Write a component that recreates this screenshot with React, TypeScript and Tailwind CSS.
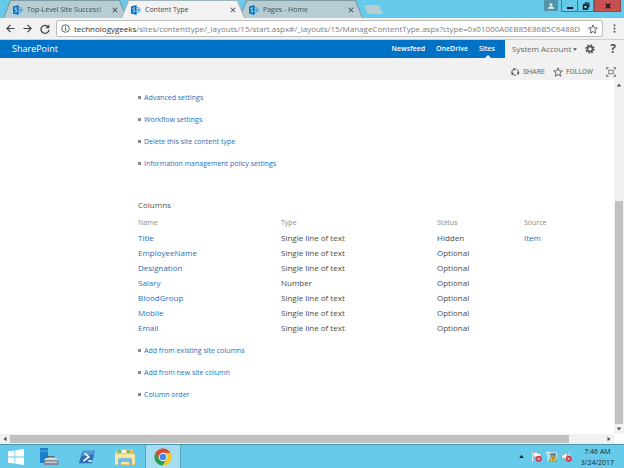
import type { ReactNode } from "react";
import { clsx } from "clsx";

const TABS = [
  { title: "Top-Level Site Successf", active: false },
  { title: "Content Type", active: true },
  { title: "Pages - Home", active: false },
];

const SETTINGS_LINKS = [
  "Advanced settings",
  "Workflow settings",
  "Delete this site content type",
  "Information management policy settings",
];

const COLUMN_LINKS = ["Add from existing site columns", "Add from new site column", "Column order"];

const COLUMNS = [
  { name: "Title", type: "Single line of text", status: "Hidden", source: "Item" },
  { name: "EmployeeName", type: "Single line of text", status: "Optional", source: "" },
  { name: "Designation", type: "Single line of text", status: "Optional", source: "" },
  { name: "Salary", type: "Number", status: "Optional", source: "" },
  { name: "BloodGroup", type: "Single line of text", status: "Optional", source: "" },
  { name: "Mobile", type: "Single line of text", status: "Optional", source: "" },
  { name: "Email", type: "Single line of text", status: "Optional", source: "" },
];

function SharePointIcon() {
  return (
    <svg viewBox="0 0 18 18" className="w-[10px] h-[10px] shrink-0">
      <circle cx="12" cy="9" r="4.6" fill="none" stroke="#5ba3dc" strokeWidth="1.8" />
      <circle cx="13" cy="9" r="1.8" fill="#2b84cc" />
      <path d="M0 2.5 10 0v18L0 15.5z" fill="#0072c6" />
      <path d="M7.2 5.8C4.8 4.6 3 5.6 3.2 7c.3 2 4 1.7 3.9 3.9C7 12.6 5 13.2 2.8 12" fill="none" stroke="#fff" strokeWidth="1.5" />
    </svg>
  );
}

function CloseIcon() {
  return (
    <svg viewBox="0 0 8 8" className="w-[6px] h-[6px]" stroke="#4a5357" strokeWidth="1.4">
      <path d="M1 1l6 6M7 1 1 7" />
    </svg>
  );
}

function Tab({ title, active }: { title: string; active: boolean }) {
  return (
    <div
      className={clsx(
        "relative w-[124px] h-[18px] -mr-[6px] pt-px px-px [clip-path:polygon(7px_0,117px_0,100%_100%,0_100%)]",
        active ? "z-10 bg-[#9fb4bb]" : "bg-[#7f9ca6]"
      )}
    >
      <div
        className={clsx(
          "flex items-center h-full pl-[9px] pr-[7px] [clip-path:polygon(7px_0,115px_0,100%_100%,0_100%)]",
          active ? "bg-[#f2f2f2]" : "bg-[#b5cdd3]"
        )}
      >
        <SharePointIcon />
        <span
          className={clsx(
            "ml-[4px] flex-1 whitespace-nowrap text-[7px] leading-[12px] text-[#414b50]",
            !active && "[mask-image:linear-gradient(to_right,#000_85%,transparent)]"
          )}
        >
          {title}
        </span>
        <button aria-label={`Close ${title}`} className="ml-[4px] w-[8px] flex justify-center">
          <CloseIcon />
        </button>
      </div>
    </div>
  );
}

function WindowControls() {
  return (
    <div className="ml-auto mr-[3px] flex items-start">
      <button aria-label="User" className="mr-[3px] w-[14px] h-[11px] bg-[#5294a8] flex items-center justify-center">
        <svg viewBox="0 0 10 10" className="w-[6px] h-[6px]" fill="#e4f1f5">
          <circle cx="5" cy="2.8" r="2.4" />
          <path d="M0 9.5V8l3-2h4l3 2v1.5z" />
        </svg>
      </button>
      <button aria-label="Minimize" className="w-[17px] h-[12px] border border-t-0 border-[#3b7f96] flex items-center justify-center">
        <svg viewBox="0 0 8 8" className="w-[8px] h-[8px]">
          <path d="M1 5h6v2H1z" fill="#111" />
        </svg>
      </button>
      <button aria-label="Restore" className="w-[16px] h-[12px] border border-t-0 border-l-0 border-[#3b7f96] flex items-center justify-center">
        <svg viewBox="0 0 8 8" className="w-[8px] h-[8px]" fill="none" stroke="#111">
          <path d="M3 2V1h4v4H6" />
          <path d="M1.5 3h4v4h-4z" strokeWidth="1.4" />
        </svg>
      </button>
      <button aria-label="Close window" className="w-[27px] h-[12px] bg-[#c75050] border border-t-0 border-[#8f4a4e] flex items-center justify-center">
        <svg viewBox="0 0 8 8" className="w-[6px] h-[6px]" stroke="#111" strokeWidth="1.9">
          <path d="M1 1l6 6M7 1 1 7" />
        </svg>
      </button>
    </div>
  );
}

function StarIcon() {
  return (
    <svg viewBox="0 0 12 12" className="w-[10px] h-[10px] shrink-0" fill="none" stroke="#5a5a5a" strokeWidth="1.1">
      <path d="M6 1l1.400 3.600 3.900.2-3 2.500 1 3.800L6 9l-3.300 2.100 1-3.800-3-2.500 3.900-.2z" />
    </svg>
  );
}

function Toolbar() {
  return (
    <div className="flex items-center h-[22px] px-[6px] bg-[#f2f2f2] border-b border-[#cfcfcf]">
      <button aria-label="Back" className="w-[17px]">
        <svg viewBox="0 0 10 10" className="w-[9px] h-[9px]" fill="none" stroke="#444" strokeWidth="1.3">
          <path d="M9.5 5H1M5 1 1 5l4 4" />
        </svg>
      </button>
      <button aria-label="Forward" className="w-[17px]">
        <svg viewBox="0 0 10 10" className="w-[9px] h-[9px]" fill="none" stroke="#444" strokeWidth="1.3">
          <path d="M.5 5H9M5 1l4 4-4 4" />
        </svg>
      </button>
      <button aria-label="Reload" className="w-[16px]">
        <svg viewBox="0 0 10 10" className="w-[10px] h-[10px]" fill="none" stroke="#444" strokeWidth="1.3">
          <path d="M8.3 3A4 4 0 1 0 9 5.8" />
          <path d="M9.3.5v3.8H5.5z" fill="#444" stroke="none" />
        </svg>
      </button>
      <div className="flex items-center flex-1 min-w-0 h-[17px] px-[4px] bg-white border border-[#bdbdbd] rounded-[2px]">
        <svg viewBox="0 0 10 10" className="w-[9px] h-[9px] shrink-0" fill="none" stroke="#555">
          <circle cx="5" cy="5" r="4.2" />
          <path d="M5 4.300v3.200M5 2.300v1.200" strokeWidth="1.1" />
        </svg>
        <div className="ml-[4px] flex-1 min-w-0 whitespace-nowrap text-[8px] leading-[14px] text-[#7d7d7d]">
          <span className="text-[#2f2f2f]">technologygeeks</span>
          /sites/contenttype/_layouts/15/start.aspx#/_layouts/15/ManageContentType.aspx?ctype=0x01000A0EB85E86B5C6488D
        </div>
        <button aria-label="Bookmark this page" className="ml-[3px]">
          <StarIcon />
        </button>
      </div>
      <button aria-label="Menu" className="ml-[8px] w-[7px] flex justify-center">
        <svg viewBox="0 0 4 12" className="w-[3px] h-[9px]" fill="#555">
          <circle cx="2" cy="1.6" r="1.3" />
          <circle cx="2" cy="6" r="1.3" />
          <circle cx="2" cy="10.4" r="1.3" />
        </svg>
      </button>
    </div>
  );
}

function SuiteBar() {
  return (
    <div className="flex h-[18px] leading-[18px]">
      <div className="flex flex-1 pl-[12px] pr-[10px] bg-[#0072c6] text-white">
        <a href="#" className="text-[9px]">SharePoint</a>
        <nav className="ml-auto flex gap-[11px] text-[7px] font-semibold">
          <a href="#">Newsfeed</a>
          <a href="#">OneDrive</a>
          <a href="#" className="relative">
            Sites
            <span className="absolute left-1/2 bottom-0 -ml-[2px] border-x-[3px] border-b-[3px] border-x-transparent border-b-[#f1f1f1]" />
          </a>
        </nav>
      </div>
      <div className="flex items-center w-[119px] px-[7px] text-[#666]">
        <button className="flex items-center gap-[2px] text-[8px] whitespace-nowrap">
          System Account
          <svg viewBox="0 0 6 4" className="w-[4px] h-[3px]" fill="#555">
            <path d="M0 0h6L3 4z" />
          </svg>
        </button>
        <button aria-label="Settings" className="ml-auto">
          <svg viewBox="0 0 20 20" className="w-[10px] h-[10px]" fill="none" stroke="#555">
            <circle cx="10" cy="10" r="5.2" strokeWidth="3.4" />
            <circle cx="10" cy="10" r="8" strokeWidth="3" strokeDasharray="3.140 3.140" />
          </svg>
        </button>
        <button aria-label="Help" className="ml-[14px] w-[8px] text-[12px] font-bold text-[#555]">?</button>
      </div>
    </div>
  );
}

function ActionBar() {
  return (
    <div className="flex items-center justify-end h-[22px] pt-[5px] pr-[8px] font-[Roboto,sans-serif] text-[7px] leading-[10px] text-[#666]">
      <button className="flex items-center gap-[3px]">
        <svg viewBox="0 0 20 20" className="w-[10px] h-[10px]" fill="none" stroke="#555" strokeWidth="2">
          <path d="M4 12A6.500 6.500 0 0 1 8 4M13 4.200A6.500 6.500 0 0 1 16 13M12.500 16.200a6.500 6.500 0 0 1-6-.8" />
          <path d="M7 1l5 3-4 4zM19 10l-2 6-4-4zM2 11l6 1-4 5z" fill="#555" stroke="none" />
        </svg>
        SHARE
      </button>
      <button className="ml-[8px] flex items-center gap-[3px]">
        <StarIcon />
        FOLLOW
      </button>
      <button aria-label="Focus on content" className="ml-[13px]">
        <svg viewBox="0 0 20 20" className="w-[10px] h-[10px]" fill="none" stroke="#666" strokeWidth="1.6">
          <path d="M1 5V1h4M15 1h4v4M19 15v4h-4M5 19H1v-4" />
          <path d="M5.500 6.500h9v7h-9z" />
          <path d="M1 1l4 5M19 1l-4 5M1 19l4-5M19 19l-4-5" strokeWidth="1" />
        </svg>
      </button>
    </div>
  );
}

function LinkList({ items }: { items: string[] }) {
  return (
    <ul className="flex flex-col gap-[11px]">
      {items.map(item => (
        <li key={item} className="flex items-center gap-[3px] h-[11px] text-[7px] leading-[11px]">
          <span className="w-[3px] h-[3px] bg-[#8a8a8a]" />
          <a href="#" className="text-[#1f6fb8]">{item}</a>
        </li>
      ))}
    </ul>
  );
}

function ColumnsTable() {
  return (
    <table className="w-full table-fixed text-left text-[8px] leading-[15px] text-[#4a4a4a]">
      <colgroup>
        <col className="w-[143px]" />
        <col className="w-[156px]" />
        <col className="w-[87px]" />
        <col />
      </colgroup>
      <thead>
        <tr className="h-[15px] text-[7px] text-[#8a8a8a]">
          <th className="font-normal">Name</th>
          <th className="font-normal">Type</th>
          <th className="font-normal">Status</th>
          <th className="font-normal">Source</th>
        </tr>
      </thead>
      <tbody>
        {COLUMNS.map(c => (
          <tr key={c.name} className="h-[15px]">
            <td><a href="#" className="text-[#1f6fb8]">{c.name}</a></td>
            <td>{c.type}</td>
            <td>{c.status}</td>
            <td>{c.source && <a href="#" className="text-[#1f6fb8]">{c.source}</a>}</td>
          </tr>
        ))}
      </tbody>
    </table>
  );
}

function Arrow({ d }: { d: string }) {
  return (
    <svg viewBox="0 0 8 8" className="w-[6px] h-[6px]" fill="#505050">
      <path d={d} />
    </svg>
  );
}

function VerticalScrollbar() {
  return (
    <div className="flex flex-col w-[10px] bg-[#f1f1f1]">
      <span className="h-[10px] flex items-center justify-center"><Arrow d="M1 6h6L4 2z" /></span>
      <div className="flex-1 flex flex-col pt-[111px]">
        <span className="flex-1 mx-px bg-[#c1c1c1]" />
      </div>
      <span className="h-[10px] flex items-center justify-center"><Arrow d="M1 2h6L4 6z" /></span>
    </div>
  );
}

function HorizontalScrollbar() {
  return (
    <div className="flex h-[10px] mr-[10px] bg-[#f1f1f1]">
      <span className="w-[10px] flex items-center justify-center"><Arrow d="M6 1v6L2 4z" /></span>
      <div className="flex-1 pr-[35px] py-px">
        <span className="block h-full bg-[#c1c1c1]" />
      </div>
      <span className="w-[10px] flex items-center justify-center"><Arrow d="M2 1v6l4-3z" /></span>
    </div>
  );
}

function TaskButton({ label, active, children }: { label: string; active?: boolean; children: ReactNode }) {
  return (
    <button
      aria-label={label}
      className={clsx(
        "w-[36px] mr-[2px] flex items-center justify-center border-x",
        active ? "bg-[#a5dcf2] border-[#5a9fb8]" : "border-transparent"
      )}
    >
      {children}
    </button>
  );
}

function Taskbar() {
  return (
    <footer className="flex h-[24px] shrink-0 bg-[#66cbea] border-t border-[#4b95ab]">
      <button aria-label="Start" className="w-[31px] flex items-center justify-center">
        <svg viewBox="0 0 16 16" className="w-[16px] h-[16px]" fill="#fff">
          <path d="M0 2.300 6.500 1.400v6.200H0zM7.300 1.300 16 0v7.600H7.300zM0 8.400h6.500v6.200L0 13.700zM7.300 8.400H16V16l-8.700-1.300z" />
        </svg>
      </button>
      <TaskButton label="Server Manager">
        <svg viewBox="0 0 20 20" className="w-[20px] h-[20px]">
          <path d="M1 1h8v15H1z" fill="#1c7fc9" />
          <path d="M1 4h8" stroke="#75bfe8" strokeWidth=".8" />
          <path d="M9 11V9.500h6V11" fill="none" stroke="#55646c" />
          <path d="M5 13l2-2h10l2.500 2z" fill="#d2dadd" />
          <path d="M5 13h14.500v5H5z" fill="#7f8e95" />
          <path d="M6.500 15.200h11.500" stroke="#e8eef0" />
        </svg>
      </TaskButton>
      <TaskButton label="Windows PowerShell">
        <svg viewBox="0 0 20 20" className="w-[18px] h-[18px]">
          <path d="M5 3h14l-3.500 14H1z" fill="#2e6eb5" />
          <path d="M5 3h14l-1 4-14 2z" fill="#5b98d3" />
          <path d="M7.500 6l4.500 4-6 4.500M11.500 14.500h4" fill="none" stroke="#fff" strokeWidth="1.8" />
        </svg>
      </TaskButton>
      <TaskButton label="File Explorer">
        <svg viewBox="0 0 22 20" className="w-[22px] h-[20px]">
          <path d="M1 4h6l1-2h11v5h2v11H1z" fill="#e8c567" />
          <path d="M4 3h3v3H4zM13 3h3v3h-3z" fill="#76b96f" />
          <path d="M8 3h4v3H8z" fill="#f8f3df" />
          <path d="M1 7h20v10H1z" fill="#f9e6a4" />
          <path d="M4 18v-5q0-2 2-2h10q2 0 2 2v5h-3v-3H7v3z" fill="#79bce0" />
        </svg>
      </TaskButton>
      <TaskButton label="Google Chrome" active>
        <svg viewBox="0 0 20 20" className="w-[18px] h-[18px]">
          <circle cx="10" cy="10" r="9.5" fill="#f3c925" />
          <path d="M1.800 5.250A9.500 9.500 0 0 1 18.200 5.250H10L5.900 12.400z" fill="#dc4437" />
          <path d="M1.800 5.250 5.900 12.400 10 14.700l3.600-2-4.100 6.800A9.500 9.500 0 0 1 1.800 5.250z" fill="#249b58" />
          <circle cx="10" cy="10" r="4.7" fill="#fff" />
          <circle cx="10" cy="10" r="3.7" fill="#4385ec" />
        </svg>
      </TaskButton>
      <div className="ml-auto flex items-center pr-[10px]">
        <svg viewBox="0 0 6 4" className="w-[5px] h-[3px] mr-[7px]" fill="#111">
          <path d="M0 4h6L3 0z" />
        </svg>
        <div className="flex gap-[4px]">
          <svg viewBox="0 0 20 20" className="w-[11px] h-[11px]">
            <path d="M3 1v18" stroke="#eef3f4" strokeWidth="2" />
            <path d="M4 2h7l1 2h6v9h-7l-1-2H4z" fill="#f7fafb" stroke="#6d7d83" />
            <circle cx="14" cy="14" r="5.5" fill="#d7314a" />
            <path d="M12 12l4 4M16 12l-4 4" stroke="#fff" strokeWidth="1.5" />
          </svg>
          <svg viewBox="0 0 20 20" className="w-[11px] h-[11px]">
            <path d="M2 1v5q0 2 2 2v10M1 3h7" fill="none" stroke="#eef3f4" strokeWidth="2" />
            <path d="M7 3h12v9H7z" fill="#668896" stroke="#eef3f4" strokeWidth="1.5" />
            <path d="M13 7l6.500 12h-13z" fill="#f4c632" stroke="#a67c15" />
            <path d="M13 11v4M13 16v1.500" stroke="#222" strokeWidth="1.5" />
          </svg>
          <svg viewBox="0 0 20 20" className="w-[11px] h-[11px]">
            <path d="M1 7h4l6-5v16l-6-5H1z" fill="#f7fafb" stroke="#6d7d83" />
            <path d="M14 4q4 5 0 11" fill="none" stroke="#fff" strokeWidth="1.5" />
            <circle cx="14" cy="14" r="5.5" fill="#d7314a" />
            <path d="M12 12l4 4M16 12l-4 4" stroke="#fff" strokeWidth="1.5" />
          </svg>
        </div>
        <div className="ml-[9px] text-center text-[7px] leading-[11px] text-[#122a33]">
          <div>7:46 AM</div>
          <div>3/24/2017</div>
        </div>
      </div>
    </footer>
  );
}

export default function App() {
  return (
    <div className="flex flex-col min-h-screen bg-white font-['Open_Sans','Noto_Sans',sans-serif]">
      <header>
        <div className="flex h-[18px] pl-[3px] bg-[#66cbea]">
          {TABS.map(tab => (
            <Tab key={tab.title} title={tab.title} active={tab.active} />
          ))}
          <button
            aria-label="New tab"
            className="ml-[7px] mt-[5px] w-[19px] h-[9px] bg-[#b5cdd3] [clip-path:polygon(0_0,15px_0,100%_100%,4px_100%)]"
          />
          <WindowControls />
        </div>
        <Toolbar />
      </header>

      <div className="bg-[#f1f1f1]">
        <SuiteBar />
        <ActionBar />
      </div>

      <div className="flex flex-1">
        <main className="flex-1 min-w-0 pl-[138px] pt-[12px]">
          <LinkList items={SETTINGS_LINKS} />
          <section className="mt-[30px]">
            <h2 className="mb-[4px] text-[8px] leading-[12px] text-[#555]">Columns</h2>
            <ColumnsTable />
          </section>
          <div className="mt-[10px]">
            <LinkList items={COLUMN_LINKS} />
          </div>
        </main>
        <VerticalScrollbar />
      </div>
      <HorizontalScrollbar />
      <Taskbar />
    </div>
  );
}
